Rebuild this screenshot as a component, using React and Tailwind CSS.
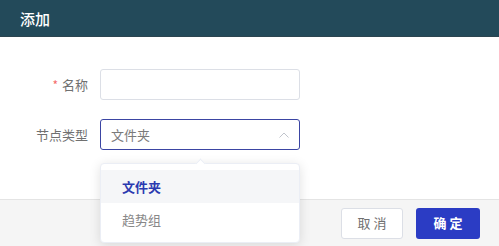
import { useState } from "react";

const font = { fontFamily: '"Noto Sans CJK SC", "Noto Sans", sans-serif' };

export default function App() {
  const [name, setName] = useState("");
  const [type, setType] = useState("文件夹");
  const options = ["文件夹", "趋势组"];

  return (
    <div className="relative w-[499px] h-[246px] overflow-hidden bg-white" style={font}>
      <header className="h-[37px] bg-[#234a5a] flex items-center px-[20px] border-b border-[#2c4550]">
        <span className="text-[15px] font-medium text-white leading-none">添加</span>
      </header>

      <main className="h-[162px] pt-[32px] flex flex-col gap-[19px]">
        <div className="flex items-center">
          <label className="w-[88px] text-right text-[13px] text-[#707070]">
            <span className="text-[#f56c6c] mr-[4px] text-[12px]">*</span>名称
          </label>
          <input
            value={name}
            onChange={(e) => setName(e.target.value)}
            className="ml-[12px] w-[200px] h-[31px] border border-[#dcdfe6] rounded-[3px] px-[10px] text-[13px] outline-none"
          />
        </div>
        <div className="flex items-center">
          <label className="w-[88px] text-right text-[13px] text-[#707070]">节点类型</label>
          <div className="ml-[12px] w-[200px] h-[31px] border border-[#3b45a3] rounded-[3px] pl-[10px] pr-[9px] flex items-center justify-between">
            <span className="text-[13px] text-[#7a7a7a]">{type}</span>
            <svg width="12" height="8" viewBox="0 0 12 8" fill="none">
              <path d="M1.5 6.5 L6 2 L10.5 6.5" stroke="#c0c4cc" strokeWidth="1" />
            </svg>
          </div>
        </div>
      </main>

      <footer className="h-[47px] bg-[#f5f5f5] border-t border-[#e4e4e4] flex items-center justify-end gap-[13px] pr-[19px]">
        <button className="w-[62px] h-[31px] bg-white border border-[#dcdfe6] rounded-[3px] text-[13px] text-[#707070] tracking-[3px] pl-[3px]">
          取消
        </button>
        <button className="w-[64px] h-[31px] bg-[#2b3cc4] rounded-[3px] text-[13px] font-bold text-white tracking-[3px] pl-[3px]">
          确定
        </button>
      </footer>

      <div className="absolute left-[100px] top-[163px] w-[200px] h-[80px] bg-white rounded-[4px] border border-[#ebeef5] shadow-[0_2px_12px_rgba(0,0,0,0.12)] py-[6px]">
        <div className="absolute -top-[4px] left-[96px] w-[7px] h-[7px] bg-white rotate-45 border-l border-t border-[#ebeef5]" />
        {options.map((o) => (
          <div
            key={o}
            onClick={() => setType(o)}
            className={`h-[33px] flex items-center pl-[21px] text-[13px] ${
              o === type ? "bg-[#f5f6f8] text-[#2b3ab0] font-bold" : "text-[#888]"
            }`}
          >
            {o}
          </div>
        ))}
      </div>
    </div>
  );
}
